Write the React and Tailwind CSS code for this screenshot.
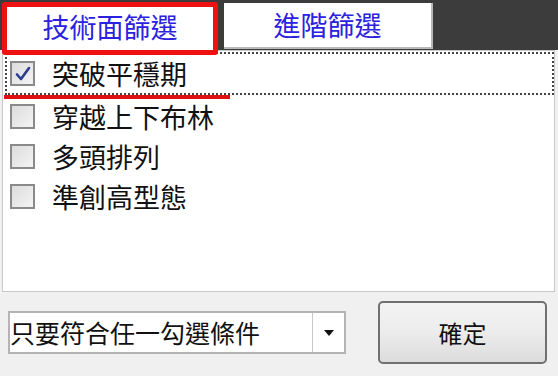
import React from "react";

const font = { fontFamily: '"Noto Sans CJK TC", "Noto Sans CJK SC", sans-serif' };

function Box({ checked }) {
  return (
    <div className="w-[25px] h-[25px] border-2 border-[#8a8a8a] bg-gradient-to-br from-[#dcdcdc] to-[#f4f4f4] flex items-center justify-center shrink-0">
      {checked && (
        <svg width="18" height="18" viewBox="0 0 18 18">
          <path d="M3 9.5 L7 14 L15 3" fill="none" stroke="#2b3b8f" strokeWidth="2.6" strokeLinecap="round" strokeLinejoin="round" />
        </svg>
      )}
    </div>
  );
}

function Row({ label, checked, focused }) {
  return (
    <div
      className={
        "flex items-center gap-[17px] pl-[3px] h-[40px] " +
        (focused ? "border-2 border-dotted border-[#444] h-[43px]" : "border-2 border-transparent")
      }
    >
      <Box checked={checked} />
      <span className="text-[27px] leading-none text-[#111]">{label}</span>
    </div>
  );
}

export default function App() {
  return (
    <div className="relative w-[558px] h-[376px] bg-[#f0f0f0] overflow-hidden" style={font}>
      <div className="flex h-[50px] bg-[#3c3c3c] items-start pt-[3px] pl-[3px]">
        <div className="w-[214px] h-[48px] bg-white flex items-center justify-center text-[27px] text-[#2a22e0]">
          技術面篩選
        </div>
        <div className="ml-[7px] w-[209px] h-[46px] bg-white border-r-2 border-b-2 border-[#b8b8b8] flex items-center justify-center text-[27px] text-[#2a22e0]">
          進階篩選
        </div>
      </div>
      <div className="ml-[2px] w-[553px] h-[242px] bg-white border border-[#c8c8c8] pt-[1px] pl-[2px]">
        <Row label="突破平穩期" checked focused />
        <div className="h-[1px]" />
        <Row label="穿越上下布林" />
        <Row label="多頭排列" />
        <Row label="準創高型態" />
      </div>
      <div className="flex items-center pl-[8px] pt-[9px]">
        <div className="w-[338px] h-[43px] bg-white border-2 border-[#b4b4b4] flex items-center">
          <span className="flex-1 text-[25px] leading-none text-[#111]">只要符合任一勾選條件</span>
          <div className="w-[32px] h-full border-l border-[#c8c8c8] flex items-center justify-center">
            <svg width="12" height="8" viewBox="0 0 12 8"><path d="M1 1 L11 1 L6 7 Z" fill="#111" /></svg>
          </div>
        </div>
        <div className="ml-[32px] w-[169px] h-[63px] rounded-[5px] border-2 border-[#707070] bg-gradient-to-b from-[#f3f3f3] via-[#ececec] to-[#dcdcdc] flex items-center justify-center text-[24px] text-[#111]">
          確定
        </div>
      </div>
      <div className="absolute left-[2px] top-[2px] w-[216px] h-[53px] border-[5px] border-[#ee1111] rounded-[3px]" />
      <div className="absolute left-[4px] top-[95px] w-[226px] h-[4px] bg-[#dd1111]" />
    </div>
  );
}
